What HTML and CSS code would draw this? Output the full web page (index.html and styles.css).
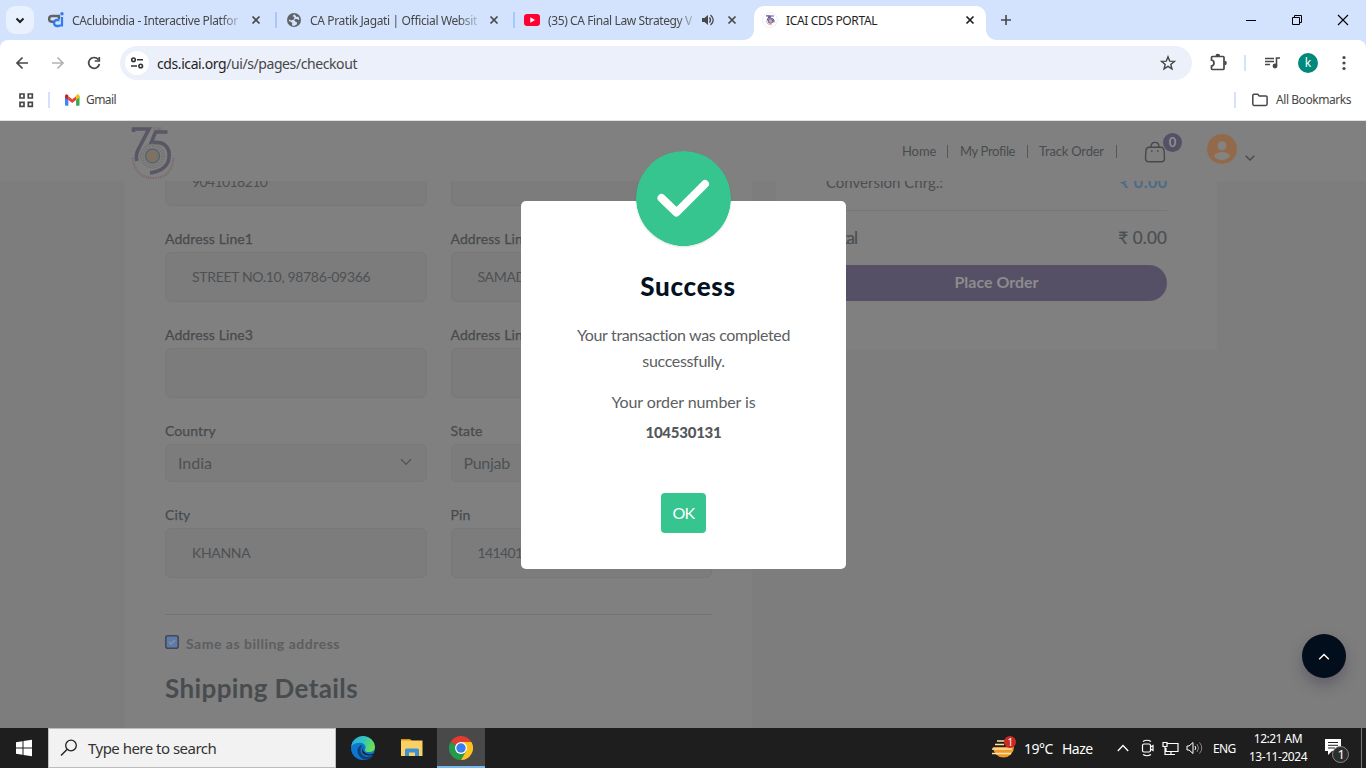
FILE: index.html
```html
<!DOCTYPE html>
<html lang="en">
<head>
<meta charset="utf-8">
<title>ICAI CDS PORTAL</title>
<link rel="stylesheet" href="styles.css">
</head>
<body>
<div class="desktop">
  <div class="tabstrip">
    <div class="tab-search"><svg width="28" height="28"><path d="M10.500 12.500l3.500 3.500 3.500-3.500" fill="none" stroke="#1f1f1f" stroke-width="2"/></svg></div>
    <div class="tab">
      <svg class="fav" width="16" height="16" viewBox="0 0 16 16" fill="none"><path d="M6 9.800H4A2.900 2.900 0 0 1 4 4h7v3" stroke="#5f6368" stroke-width="2.400"/><path d="M11.500 8H9a3 3 0 0 0 0 6h2.500" stroke="#2f7bf5" stroke-width="2.400"/><path d="M14 5v8.500h-3" stroke="#2f7bf5" stroke-width="2.200"/><circle cx="14" cy="1.800" r="1.700" fill="#2f7bf5"/></svg>
      <span class="tab-title fade t1">CAclubindia - Interactive Platfor</span>
      <svg class="close" width="10" height="10"><path d="M1.500 1.500l7 7m0-7l-7 7" stroke="#474747" stroke-width="1.700"/></svg>
    </div>
    <div class="tab sep">
      <svg class="fav" width="16" height="16" viewBox="0 0 16 16"><circle cx="8" cy="8" r="7" fill="#5f6368"/><path d="M8.500 2.200L6.500 4l2 1.200-.6 2.300L5 8.500 3 7.300V9l2 1 1.300 1-.4 2.200 2 .9 2.800-1.600.4-2-2.600-1.600.3-1.800h2.600l1.700 1.400V6L12 4.500 10.500 5z" fill="#d3e3fd"/></svg>
      <span class="tab-title fade t2">CA Pratik Jagati | Official Websit</span>
      <svg class="close" width="10" height="10"><path d="M1.500 1.500l7 7m0-7l-7 7" stroke="#474747" stroke-width="1.700"/></svg>
    </div>
    <div class="tab sep">
      <svg class="fav" width="16" height="16"><rect y="2" width="16" height="12" rx="3" fill="#ff0033"/><path d="M6.300 5.300v5.400L11 8z" fill="#fff"/></svg>
      <span class="tab-title fade short t3">(35) CA Final Law Strategy V</span>
      <svg class="sound" width="14" height="14" viewBox="0 0 14 14"><path d="M1 5h2.500L7 2v10L3.500 9H1z" fill="#474747"/><path d="M8.500 4.500q2 2.500 0 5M9.500 2q5.500 5 0 10" fill="none" stroke="#474747" stroke-width="1.300"/></svg>
      <svg class="close" width="10" height="10"><path d="M1.500 1.500l7 7m0-7l-7 7" stroke="#474747" stroke-width="1.700"/></svg>
    </div>
    <div class="tab active">
      <svg class="fav" width="16" height="16"><circle cx="8" cy="8" r="7.500" fill="#fff" stroke="#eeeef4"/><path d="M4 3.800h3.500L5 8.500M12 4H8.500L7.800 6q5 .3 4 4.500" fill="none" stroke="#5a5a9c" stroke-width="1.200"/><circle cx="8.500" cy="9" r="2.300" fill="#d9a18e" stroke="#66609b"/><path d="M4 9q1 4 6 4" fill="none" stroke="#e2a5ae"/></svg>
      <span class="tab-title t4">ICAI CDS PORTAL</span>
      <svg class="close" width="10" height="10"><path d="M1.500 1.500l7 7m0-7l-7 7" stroke="#1f1f1f" stroke-width="1.700"/></svg>
    </div>
    <svg class="newtab" width="12" height="12"><path d="M6 1v10M1 6h10" stroke="#474747" stroke-width="1.600"/></svg>
    <div class="win">
      <svg width="46" height="40"><path d="M18 20.500h10" stroke="#000"/></svg>
      <svg width="46" height="40"><path d="M18.500 17.500h7v7h-7zM20.500 17.500v-2h7v7h-2" fill="none" stroke="#000"/></svg>
      <svg width="46" height="40"><path d="M18 15l10 10m0-10L18 25" stroke="#000" stroke-width="1.100"/></svg>
    </div>
  </div>
  <div class="toolbar">
    <svg width="36" height="34"><path d="M24 17H13m5.500-5.500L13 17l5.500 5.500" fill="none" stroke="#474747" stroke-width="1.700"/></svg>
    <svg width="36" height="34"><path d="M12 17h11m-5.500-5.500L23 17l-5.500 5.500" fill="none" stroke="#b3b3b3" stroke-width="1.700"/></svg>
    <svg width="36" height="34"><path d="M22.300 13.500A5.400 5.400 0 1 0 23.400 18M23.300 11v4h-4.600" fill="none" stroke="#474747" stroke-width="1.700"/></svg>
    <div class="omnibox">
      <svg class="site" width="24" height="24"><circle cx="12" cy="12" r="12" fill="#fff"/><g fill="none" stroke="#333" stroke-width="1.600"><circle cx="8.500" cy="8.800" r="1.800"/><circle cx="15.700" cy="15" r="1.800"/><path d="M12 8.800h6M6 15h6"/></g></svg>
      <span class="url"><b>cds.icai.org</b>/ui/s/pages/checkout</span>
      <svg class="star" width="16" height="16"><path d="M8 1.800l1.700 4.300 4.700.3-3.600 3 1.200 4.500L8 11.400 4 13.900l1.200-4.500-3.600-3 4.700-.3z" fill="none" stroke="#474747" stroke-width="1.400"/></svg>
    </div>
    <svg class="ext" width="36" height="34"><path d="M12.500 10.500H23q1 0 1 1v11q0 1-1 1H12.500q-1 0-1-1V20q2.500-.4 2.500-3t-2.500-3v-2.500q0-1 1-1z" fill="none" stroke="#474747" stroke-width="1.700"/><path d="M15.500 10a2.300 2.300 0 0 1 4.600 0zM24.500 14.700a2.300 2.300 0 0 1 0 4.600z" fill="#474747"/></svg>
    <i class="bar"></i>
    <svg width="36" height="34"><path d="M11 12.500h9M11 15.500h9M11 18.500h5M22.500 20v-8H26" fill="none" stroke="#474747" stroke-width="1.600"/><circle cx="21" cy="20" r="2.400" fill="#474747"/></svg>
    <div class="avatar"><span>k</span></div>
    <svg width="36" height="34" fill="#474747"><circle cx="18" cy="11.500" r="1.600"/><circle cx="18" cy="17" r="1.600"/><circle cx="18" cy="22.500" r="1.600"/></svg>
  </div>
  <div class="bookmarks">
    <svg width="16" height="16"><path d="M2 2h4v4H2zM10.300 2h4v4h-4zM2 10.300h4v4H2zM10.300 10.300h4v4h-4z" fill="none" stroke="#474747" stroke-width="1.700"/></svg>
    <i class="bar b1"></i>
    <svg class="gm" width="15" height="12"><path d="M0 2v9q0 .8.800.8H3.400V4.500z" fill="#4285f4"/><path d="M14.500 2v9q0 .8-.8.800h-2.600V4.500z" fill="#34a853"/><path d="M3.400 2.200l3.900 3 3.800-3v3.900L7.300 9 3.400 6z" fill="#ea4335"/><path d="M0 2q.3-2.500 2.600-1.300l.8.700V6L0 3.500z" fill="#c5221f"/><path d="M14.500 2q-.3-2.500-2.600-1.300l-.8.700V6l3.400-2.500z" fill="#fbbc04"/></svg>
    <span class="gmail">Gmail</span>
    <i class="bar b2"></i>
    <svg class="folder" width="16" height="14"><path d="M.8 2.500q0-1.300 1.200-1.300h3.700l1.500 1.700h6.600q1.300 0 1.300 1.200v7q0 1.300-1.300 1.300H2q-1.200 0-1.200-1.300z" fill="none" stroke="#474747" stroke-width="1.500"/></svg>
    <span class="allb">All Bookmarks</span>
  </div>

  <div class="page">
    <header class="site-header">
      <svg class="logo" width="48" height="56" viewBox="0 0 48 56"><path d="M3.500 8V5H19L9 24q-4 7-2 13" fill="none" stroke="#595666" stroke-width="3.600"/><path d="M37.500 8H25.500l-4.500 11q15-3 18 9 2 18-19 21" fill="none" stroke="#595666" stroke-width="3.600"/><circle cx="22.500" cy="32" r="12" fill="#808080" stroke="#73736f"/><circle cx="22.500" cy="32" r="9.700" fill="none" stroke="#6b6b67" stroke-width="1.500" stroke-dasharray="1 1.500"/><circle cx="22.500" cy="32" r="7" fill="#777468" stroke="#5c6370" stroke-width="1.500"/><path d="M18.500 29q0 5 4 5t4-5M22.500 28v8M19.500 36.500h6" stroke="#85705c" stroke-width="1.600" fill="none"/><path d="M2.500 34q3 20 21 20t20-20" fill="none" stroke="#7b6569" stroke-width="2.200" stroke-dasharray="1.200 1.200"/><text x="23" y="6" font-size="4.500" class="mini">ICAI</text></svg>
      <nav class="nav"><a class="n1">Home</a><i></i><a class="n2">My Profile</a><i></i><a class="n3">Track Order</a><i></i></nav>
      <div class="bag"><svg width="22" height="22" viewBox="0 0 22 22" fill="none" stroke="#45494c" stroke-width="1.400"><path d="M5 6.200h12q2.500 0 3 3l.5 8q0 3.500-3.500 3.500H5q-3.500 0-3.500-3.500l.5-8q.5-3 3-3zM7 6q0-4.600 4-4.600T15 6"/><path d="M7 10h1.500m4.500 0h1.500"/></svg><span class="count">0</span></div>
      <svg class="user" width="30" height="30"><circle cx="15" cy="15" r="15" fill="#93694b"/><circle cx="15" cy="11.800" r="4.500" fill="#858381"/><path d="M7 22q2-4 8-4t8 4q-3 4-8 4t-8-4z" fill="#858381"/></svg>
      <svg class="chev" width="10" height="6"><path d="M.7.700L5 5 9.300.7" fill="none" stroke="#45494c" stroke-width="1.300"/></svg>
    </header>
    <div class="scroll">
      <main class="columns">
        <section class="card form">
          <div class="grid">
            <div class="field first"><div class="input"><span class="v0">9041018210</span></div></div>
            <div class="field first"><div class="input"></div></div>
            <div class="field"><label>Address Line1</label><div class="input"><span class="v1">STREET NO.10, 98786-09366</span></div></div>
            <div class="field"><label>Address Line2</label><div class="input"><span class="v1">SAMADHI ROAD</span></div></div>
            <div class="field"><label>Address Line3</label><div class="input"></div></div>
            <div class="field"><label>Address Line4</label><div class="input"></div></div>
            <div class="field"><label>Country</label><div class="input select"><span>India</span><svg width="12" height="8"><path d="M1 1.200l5 5 5-5" fill="none" stroke="#53575a" stroke-width="1.400"/></svg></div></div>
            <div class="field"><label>State</label><div class="input select"><span class="pj">Punjab</span></div></div>
            <div class="field"><label>City</label><div class="input"><span class="v1">KHANNA</span></div></div>
            <div class="field"><label>Pin</label><div class="input"><span class="v0">141401</span></div></div>
          </div>
          <hr>
          <div class="same"><svg width="14" height="14"><rect x=".8" y=".8" width="12.400" height="12.400" rx="2" fill="#5d7aad" stroke="#45484e" stroke-width="1.600"/><path d="M4 7l2 2 4-4" fill="none" stroke="#8d9297" stroke-width="1.400"/></svg><span>Same as billing address</span></div>
          <h2>Shipping Details</h2>
        </section>
        <section class="card summary">
          <div class="line conv"><span>Conversion Chrg.:</span><b>₹ 0.00</b></div>
          <div class="line total"><span>Total</span><span class="amt">₹ 0.00</span></div>
          <div class="place"><span>Place Order</span></div>
        </section>
      </main>
    </div>
    <div class="modal">
      <svg class="badge" width="95" height="95"><circle cx="47.500" cy="47.500" r="47.500" fill="#36c48f"/><path d="M25.500 47L40.500 61.500 69 33" fill="none" stroke="#fff" stroke-width="8" stroke-linecap="round" stroke-linejoin="round"/></svg>
      <h1>Success</h1>
      <p class="p1">Your transaction was completed<br>successfully.</p>
      <p class="p2">Your order number is</p>
      <strong>104530131</strong>
      <div class="ok">OK</div>
    </div>
    <div class="top"><svg width="12" height="7"><path d="M1.200 6.200L6 1.500l4.800 4.700" fill="#000" stroke="#fff" stroke-width="1.500"/></svg></div>
  </div>

  <footer class="taskbar">
    <svg width="48" height="40"><path d="M16 14.200l6.500-1v6.300H16zM23.500 13l8.500-1.200v7.700h-8.500zM16 20.500h6.500v6.300l-6.500-1zM23.500 20.500H32v7.700L23.500 27z" fill="#fff"/></svg>
    <div class="search"><svg width="18" height="18"><circle cx="11" cy="6.500" r="5.300" fill="none" stroke="#222" stroke-width="1.300"/><path d="M7 10.500L1 16.500" stroke="#222" stroke-width="1.400"/></svg><span>Type here to search</span></div>
    <svg class="edge" width="48" height="40" viewBox="0 0 48 40"><defs><linearGradient id="eg" x1="0" x2="1" y1="0" y2=".3"><stop offset="0" stop-color="#2aa7e0"/><stop offset=".6" stop-color="#35c8b4"/><stop offset="1" stop-color="#68df55"/></linearGradient></defs><circle cx="24" cy="20" r="12" fill="#0c77d0"/><path d="M12.200 18A12 12 0 0 1 36 19q0 5-6 5-4.500 0-4-2 2-5-3-7-6-1.500-10.800 3z" fill="url(#eg)"/><path d="M22 17q-5 3-3 9 3 6 10 5.500 4-1 5.500-4.500-4 2.500-8.500 1.500-5-2-4.500-7 .3-2 1.500-3.500z" fill="#123f76"/><path d="M25 19q-2 3 0 5 3 3 8.500 2l2-1.500q-1.500 4-4.500 2.800-5 .7-7.500-2.300-1.500-3 1.500-6z" fill="#1e1e1e"/></svg>
    <svg width="48" height="40"><path d="M14 11h9l2 2H14z" fill="#d99408"/><path d="M14 12.500h21.500V28H14z" fill="#fdd065"/><path d="M18 28v-6q0-1.500 1.500-1.500h11q1.500 0 1.500 1.500v6h-4v-3.500h-6V28z" fill="#3b91d3"/></svg>
    <div class="chrome"><svg width="24" height="24" viewBox="0 0 24 24"><path d="M12 12L1.600 6A12 12 0 0 1 22.400 6H12z" fill="#e33b2e"/><path d="M12 12L1.600 6A12 12 0 0 0 12 24l5.200-9z" fill="#239b4b"/><path d="M12 6h10.400A12 12 0 0 1 12 24l5.200-9z" fill="#fcc31e"/><circle cx="12" cy="12" r="6" fill="#fff"/><circle cx="12" cy="12" r="4.700" fill="#3b7ded"/></svg></div>
    <div class="tray">
      <svg class="weather" width="26" height="26"><path d="M2 12a10.500 10.500 0 1 0 21 0z" fill="#ee9a2c"/><path d="M6 6h8M4 9.500h9M1 14h20M1 18.500h19" stroke="#ffe3a0" stroke-width="1.600"/><circle cx="19" cy="7" r="6" fill="#cb2a24"/><text x="16.500" y="11" class="wn">1</text></svg>
      <span class="temp">19°C</span><span class="haze">Haze</span>
      <svg class="up" width="12" height="8"><path d="M.8 7L6 1.500 11.200 7" fill="none" stroke="#fff" stroke-width="1.300"/></svg>
      <svg class="cam" width="14" height="18" fill="none" stroke="#fff" stroke-width="1.200"><rect x="1.500" y="5" width="8" height="8" rx="1.500"/><path d="M9.500 8l2.500-1.500v5L9.500 10M2 2.500q4-2.500 8 0M2 15.500q4 2.500 8 0"/></svg>
      <svg class="mon" width="17" height="15" fill="none" stroke="#fff" stroke-width="1.200"><path d="M5.500 2.500H16v8H4V7M9 10.500V13M6 13.500h7M1 1.500h4v4H1zM3 6v7.500h3"/></svg>
      <svg class="vol" width="17" height="14" fill="none" stroke="#fff"><path d="M1 5h2l4-3.500v11L3 9H1zM9 5q1.500 2 0 4"/><path d="M11 3q3 4 0 8M13.500 1.500q4.500 5.500 0 11" stroke="#888"/></svg>
      <span class="eng">ENG</span>
      <div class="clock"><span class="c1">12:21 AM</span><span class="c2">13-11-2024</span></div>
      <svg class="note" width="26" height="26"><path d="M1 1h16v12H8l-4 4v-4H1z" fill="#fff"/><path d="M4 4.500h10M4 7.300h10M4 10h7" stroke="#222"/><circle cx="16.500" cy="16.500" r="8" fill="#2d2d2d" stroke="#888"/><text x="13.500" y="21" class="nn">1</text></svg>
    </div>
  </footer>
</div>
</body>
</html>
```
FILE: styles.css
```css
*{box-sizing:border-box}
body{margin:0;font-family:"Noto Sans","Open Sans",sans-serif;overflow:hidden}
svg{display:block;flex:none}
span,a,label{white-space:nowrap}
.desktop{width:1366px;height:768px;display:flex;flex-direction:column;overflow:hidden;background:#d3e3fd}
.tabstrip{height:40px;display:flex;flex:none;font-size:12px;color:#474747}
.tab-search{width:28px;height:28px;margin:6px 4px 0 6px;border-radius:9px;background:#e9f0fe}
.tab{width:238px;height:40px;padding-left:10px;display:flex;align-items:center;position:relative}
.tab.sep::before{content:"";position:absolute;left:-1px;top:12px;width:2px;height:16px;background:#a8c7fa}
.tab-title{margin-left:8px;width:169px;line-height:20px;margin-right:10px;padding-top:1px}
.tab-title.short{width:147px;margin-right:6px}
.fade{-webkit-mask-image:linear-gradient(90deg,#000 88%,rgba(0,0,0,.15));mask-image:linear-gradient(90deg,#000 88%,rgba(0,0,0,.15))}
.t1{letter-spacing:-.36px}
.t2{letter-spacing:-.36px}
.t3{letter-spacing:-.4px}
.t4{letter-spacing:-.35px}
.sound{margin-right:12px}
.tab.active{width:232px;height:34px;margin:6px 0 0 2px;background:#fff;border-radius:10px 10px 0 0;padding:0 0 6px 8px;color:#1f1f1f}
.active .tab-title{width:165px;margin-right:14px}
.active::before,.active::after{content:"";position:absolute;bottom:0;width:10px;height:10px}
.active::before{left:-10px;background:radial-gradient(circle at 0 0,transparent 9.500px,#fff 10px)}
.active::after{right:-10px;background:radial-gradient(circle at 100% 0,transparent 9.500px,#fff 10px)}
.newtab{margin:14px 0 0 14px}
.win{display:flex;margin-left:auto}
.toolbar{height:46px;background:#fff;display:flex;align-items:center;flex:none;padding:0 4px;border-radius:8px 8px 0 0}
.omnibox{width:1072px;height:34px;margin-left:8px;border-radius:17px;background:#ecf0fa;display:flex;align-items:center;padding-left:5px}
.url{font-size:14px;color:#474747;margin-left:8px;letter-spacing:-.41px}
.url b{font-weight:400;color:#1f1f1f}
.star{margin-left:auto;margin-right:16px}
.ext{margin-left:8px}
.bar{width:2px;height:16px;background:#d3e3fd;flex:none}
.toolbar .bar{margin:0 8px}
.avatar{width:36px;display:flex;justify-content:center}
.avatar span{width:20px;height:20px;border-radius:10px;background:#00897b;color:#fff;font-size:12px;line-height:19px;text-align:center}
.bookmarks{height:35px;background:#fff;border-bottom:1px solid #dfe1e0;display:flex;align-items:center;flex:none;padding:0 15px 7px 18px;font-size:12px;color:#474747}
.b1{margin:0 15px 0 14px}
.gmail{margin-left:6px;letter-spacing:-.6px}
.b2{margin-left:auto}
.folder{margin:0 8px 0 16px}
.allb{letter-spacing:-.45px}

.page{height:607px;flex:none;background:#7d7d7d;position:relative;font-family:Lato,sans-serif;color:#4b4f52}
.site-header{height:60px;background:#808080;display:flex;align-items:flex-start;padding-left:130px}
.logo{margin-top:3px}
.mini{fill:#7b5c60;font-family:Lato,sans-serif}
.nav{display:flex;align-items:center;height:60px;width:216px;margin-left:724px;font-size:13px;color:#484c4f}
.nav i{width:1px;height:13px;background:#54585b;flex:none}
.n1,.n2,.n3{flex:none;margin-top:-1px;line-height:20px}
.n1{width:45px;letter-spacing:-.1px}
.n2{width:67px;margin-left:12px;letter-spacing:-.35px}
.n3{width:77px;margin-left:11px;letter-spacing:-.2px}
.bag{position:relative;margin:20px 0 0 26px}
.count{position:absolute;left:19px;top:-8px;width:19px;height:19px;border-radius:50%;background:#565066;color:#909090;font-weight:700;font-size:13px;line-height:19px;text-align:center}
.user{margin:13px 0 0 41px}
.chev{margin:34px 0 0 8px}
.scroll{height:547px;overflow:hidden}
.columns{display:flex;gap:24px;margin-left:125px;align-items:flex-start}
.card{background:#808080}
.form{width:627px;height:547px;padding:0 40px}
.grid{display:grid;grid-template-columns:1fr 1fr;column-gap:24px;row-gap:22px;margin-top:-25px}
.field label{display:block;height:24px;line-height:22px;font-size:14px;color:#474b4e;letter-spacing:.1px;-webkit-text-stroke:.25px #474b4e}
.input{height:50px;border:1px solid #787878;border-radius:6px;background:#7c7c7c;padding:0 26px 2px;display:flex;align-items:center;font-size:14px;color:#4d5154}
.first .input{padding-bottom:0}
.select{height:38px;padding:0 14px 2px 12px;justify-content:space-between;font-size:16px;border-color:#797979}
.pj{letter-spacing:-.3px}
.v0{letter-spacing:-.6px}
.v1{letter-spacing:-.33px}
hr{border:0;border-top:1px solid #747474;margin:36px 0 0}
.same{display:flex;align-items:flex-start;gap:7px;margin-top:20px;font-size:14px;font-weight:700;color:#5c5e60;line-height:18px;letter-spacing:.5px}
h2{margin:19px 0 0;font-size:26px;line-height:32px;font-weight:700;color:#484c4f;white-space:nowrap;letter-spacing:.38px}
.summary{width:441px;height:169px;padding:0 50px}
.line{display:flex;justify-content:space-between;align-items:center}
.conv{height:48px;margin-top:-18px;padding-bottom:10px;border-bottom:1px solid #767676;font-size:15px}
.conv b{color:#4c6a87;font-size:16px;letter-spacing:.5px;margin-right:-.5px}
.total{height:54px;font-size:17px;padding-bottom:2px;-webkit-text-stroke:.2px #4b4f52}
.total span:first-child{letter-spacing:-1px}
.amt{letter-spacing:.15px}
.place{height:36px;border-radius:18px;background:#565066;color:#8c8c8c;font-size:16px;font-weight:700;text-align:center;line-height:34px}
.modal{position:absolute;left:521px;top:80px;width:325px;height:368px;background:#fff;border-radius:5px;display:flex;flex-direction:column;align-items:center;text-align:center;color:#5c6063}
.badge{margin-top:-50px;border-radius:50%;box-shadow:0 1px 2px rgba(0,0,0,.12)}
h1{margin:24px 0 0 9px;font-size:26px;line-height:32px;color:#04111f;font-weight:900;white-space:nowrap;letter-spacing:.7px}
.modal p{margin:0;font-size:16px;line-height:26px;white-space:nowrap}
.modal .p1{margin-top:20px;letter-spacing:-.34px}
.modal .p2{margin-top:15px;letter-spacing:-.1px}
.modal strong{font-size:15px;line-height:20px;margin-top:7px;color:#54585b;font-weight:900;letter-spacing:-.25px}
.ok{width:45px;height:40px;margin-top:51px;border-radius:4px;background:#36c48f;color:#fff;font-size:16px;line-height:40px;letter-spacing:-.8px}
.top{position:absolute;left:1302px;top:513px;width:44px;height:44px;border-radius:50%;background:#020e1b;display:flex;align-items:center;justify-content:center;box-shadow:0 7px 14px rgba(60,50,75,.4)}

.taskbar{height:40px;background:#1e1e1e;display:flex;flex:none;color:#fff;font-size:12px}
.search{width:288px;background:#f2f2f2;border:1px solid #bdbdbd;color:#333;display:flex;align-items:center;padding-left:11px;font-size:15px}
.search span{margin-left:10px;letter-spacing:-.52px}
.edge{margin-left:3px}
.chrome{width:48px;margin-left:2px;background:#494949;border-bottom:2px solid #76b9ed;display:flex;justify-content:center;padding-top:8px}
.tray{margin-left:auto;display:flex;align-items:center;width:376px}
.weather{margin-left:1px}
.wn{font-size:10px;fill:#fff}
.nn{font-size:13px;fill:#fff}
.temp,.haze{font-size:14px}
.temp{width:31px;margin-left:7px;letter-spacing:-.5px}
.haze{margin-left:7px;width:32px;letter-spacing:-.5px}
.up{margin-left:23px}
.cam{margin-left:12px}
.mon{margin-left:7px}
.vol{margin-left:7px}
.eng{margin-left:10px;width:24px;letter-spacing:-.6px}
.clock{width:66px;margin-left:8px;display:flex;flex-direction:column;align-items:center;line-height:18px}
.c1{letter-spacing:-.5px}
.c2{letter-spacing:-.45px}
.note{margin:5px 0 0 13px}
.tray::after{content:"";height:40px;width:1px;background:#777;margin-left:11px}
```
